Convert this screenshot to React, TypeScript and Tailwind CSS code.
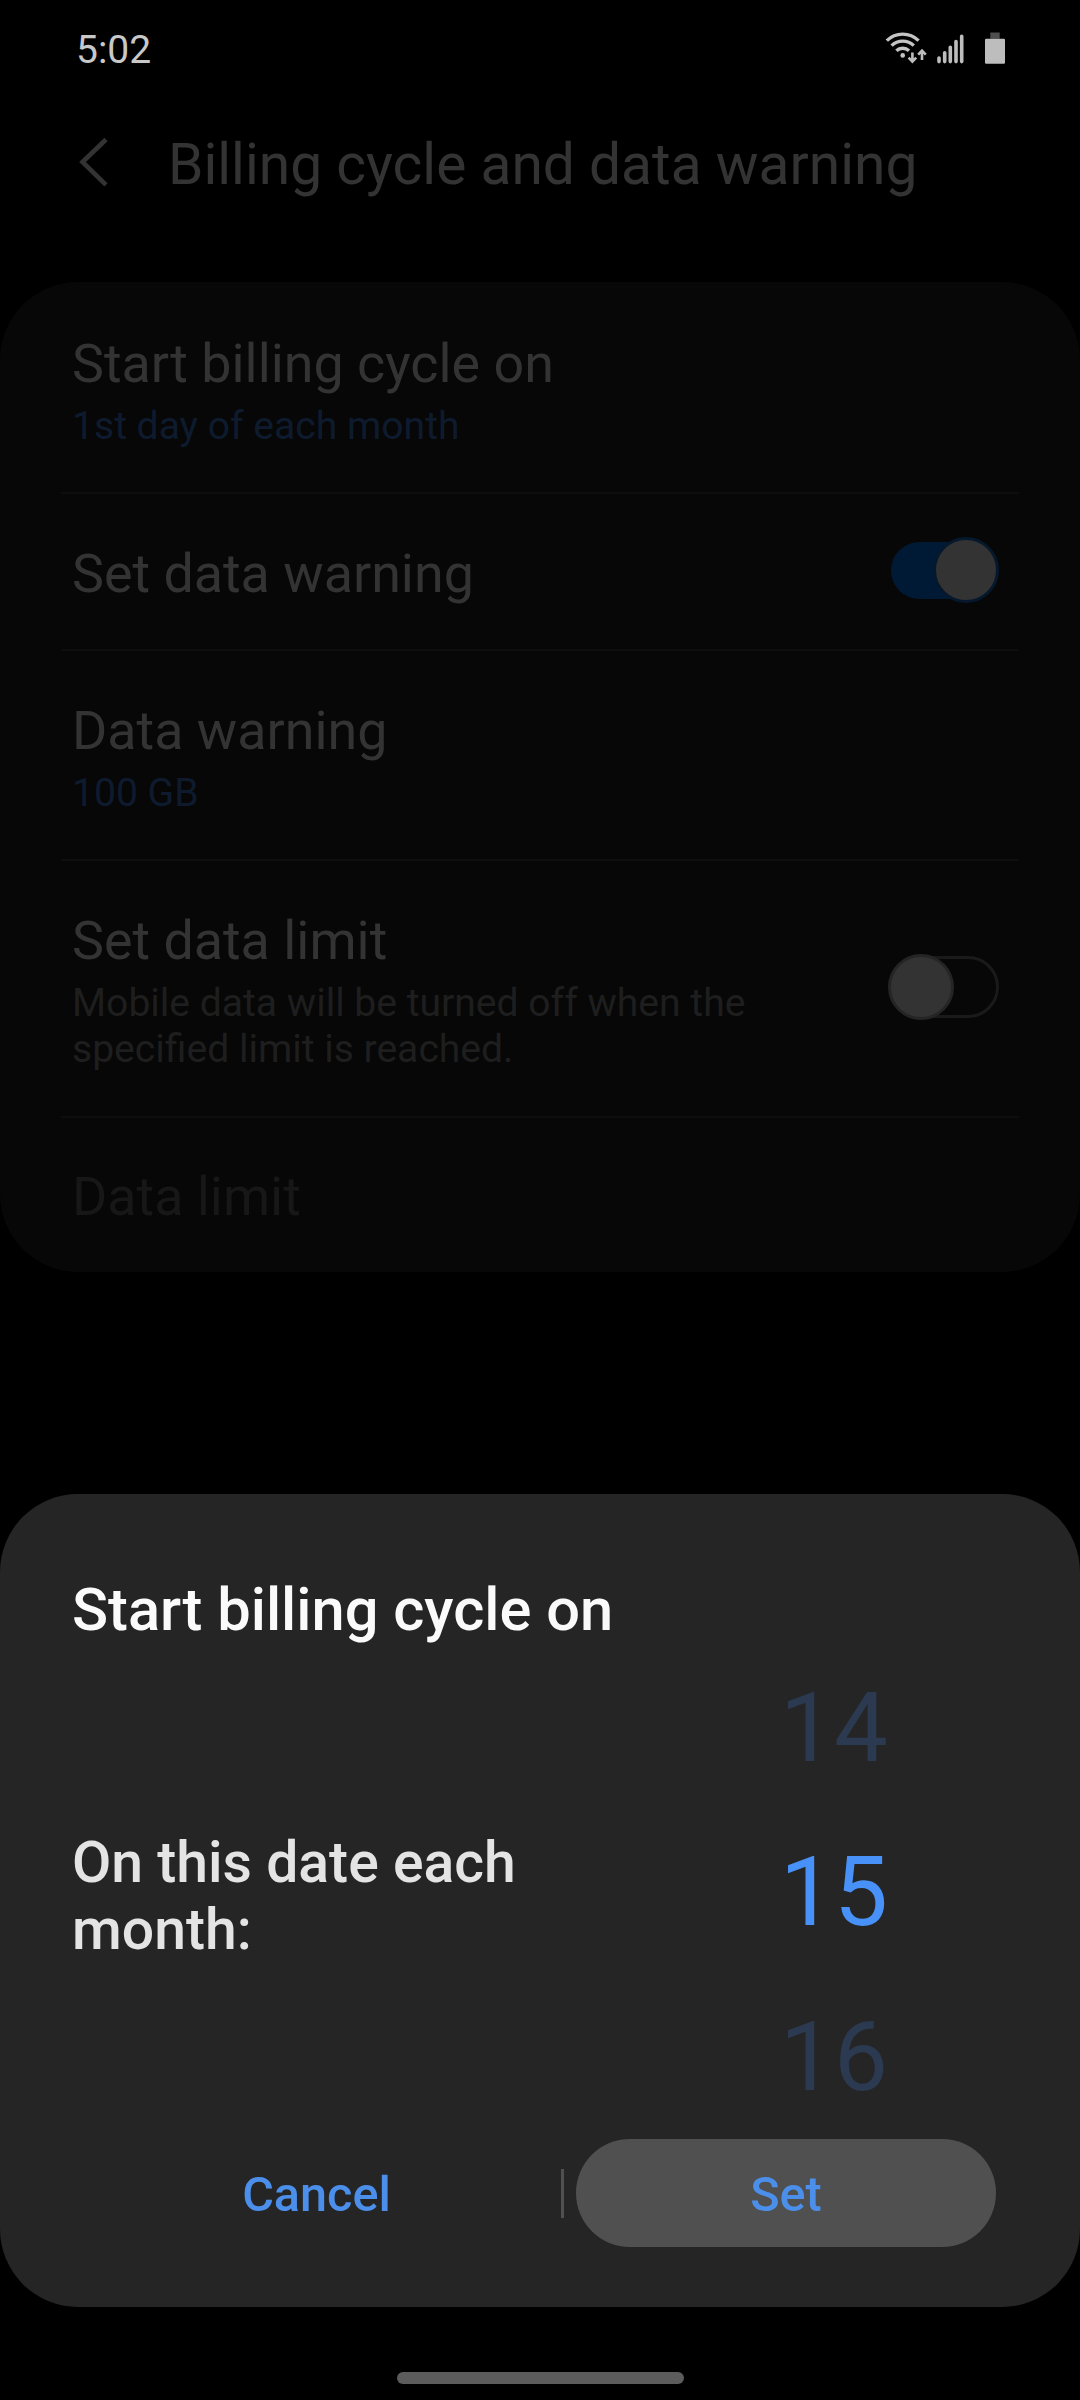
import type { ReactNode } from "react";

function StatusIcons() {
  return (
    <svg className="ml-auto h-[90px] w-[140px]" viewBox="880 0 140 90" fill="none">
      {/* Wi-Fi with transfer arrows */}
      <g stroke="#c4c4c4" strokeWidth="3.4" strokeLinecap="butt">
        <path d="M886.8 40.6A22.7 22.7 0 0 1 918.6 40.6" />
        <path d="M891.6 45.6A16 16 0 0 1 913.8 45.6" />
        <path d="M896.4 50.8A9 9 0 0 1 909 50.8" />
      </g>
      <circle cx="902.7" cy="55.4" r="2.3" fill="#c4c4c4" />
      <g stroke="#bdbdbd" strokeWidth="2.6">
        <path d="M912.4 52.4V61.6M908.6 57.6L912.4 61.6L916.2 57.6" />
        <path d="M922 60V50.6M918.2 54.6L922 50.6L925.8 54.6" />
      </g>
      {/* Signal strength */}
      <g stroke="#bdbdbd" strokeWidth="3.6" strokeLinecap="round">
        <path d="M939 58V61.6M944.7 52.8V61.6M950.3 47.3V61.6M956 41.6V61.6M961.7 36.2V61.6" />
      </g>
      {/* Battery */}
      <path d="M990.3 32.5H999.7V38.7H990.3Z" fill="#4e4e4e" />
      <rect x="985" y="38.7" width="20" height="25" rx="1.2" fill="#bdbdbd" />
    </svg>
  );
}

function SwitchOn() {
  return (
    <div className="flex h-[66px] w-[108px] items-center rounded-full">
      <div className="flex h-[57px] w-[106px] items-center justify-end rounded-full bg-[#001a36]">
        <div className="-mr-[2px] size-[66px] shrink-0 rounded-full border-[3px] border-[#06182c] bg-[#333333]" />
      </div>
    </div>
  );
}

function SwitchOff() {
  return (
    <div className="flex h-[62px] w-[110px] items-center rounded-full border-[3px] border-[#1a1a1a]">
      <div className="-ml-[4px] size-[66px] shrink-0 rounded-full border-[3px] border-[#252525] bg-[#333333]" />
    </div>
  );
}

function Row({ className, title, titleColor = "text-[#333333]", children, control, controlClass }: {
  className: string;
  title: string;
  titleColor?: string;
  children?: ReactNode;
  control?: ReactNode;
  controlClass?: string;
}) {
  return (
    <div className={`flex flex-col ${className}`}>
      <div className="flex flex-1 items-start justify-between pr-[81px] pl-[72px]">
        <div>
          <div className={`text-[53.8px] leading-[64px] ${titleColor}`}>{title}</div>
          {children}
        </div>
        {control && <div className={`shrink-0 ${controlClass}`}>{control}</div>}
      </div>
    </div>
  );
}

function Divider() {
  return <div className="mx-[61px] h-[2px] bg-[#0e0e0e]" />;
}

export default function App() {
  return (
    <div className="flex h-[2400px] w-[1080px] flex-col overflow-hidden bg-black font-[Roboto,sans-serif] whitespace-nowrap">
      <header className="flex h-[90px] items-start pr-[60px] pl-[76px]">
        <span className="pt-[27px] text-[39px] leading-[46px] text-[#c8c8c8]">5:02</span>
        <StatusIcons />
      </header>

      <div className="flex h-[192px] items-start pt-[40px] pl-[72px]">
        <svg className="mt-[2px] mr-[48px] h-[60px] w-[48px]" viewBox="72 132 48 60" fill="none">
          <path d="M106 139.5L82.5 162L106 184.8" stroke="#333333" strokeWidth="4.6" />
        </svg>
        <h1 className="pt-px text-[56.9px] leading-[68px] text-[#333333]">Billing cycle and data warning</h1>
      </div>

      <section className="flex h-[990px] flex-col rounded-[78px] bg-[#070707]">
        <Row className="h-[210px] pt-[50px]" title="Start billing cycle on">
          <div className="mt-[7px] text-[39.1px] leading-[46px] text-[#0e1b2e]">1st day of each month</div>
        </Row>
        <Divider />
        <Row
          className="h-[155px] pt-[48px]"
          title="Set data warning"
          control={<SwitchOn />}
          controlClass="-mt-[5px]"
        />
        <Divider />
        <Row className="h-[208px] pt-[48px]" title="Data warning">
          <div className="mt-[7px] text-[39.1px] leading-[46px] text-[#0e1b2e]">100 GB</div>
        </Row>
        <Divider />
        <Row
          className="h-[255px] pt-[48px]"
          title="Set data limit"
          control={<SwitchOff />}
          controlClass="mt-[47px]"
        >
          <div className="mt-[7px] text-[39.1px] leading-[46px] text-[#1e1e1e]">
            Mobile data will be turned off when the
            <br />
            specified limit is reached.
          </div>
        </Row>
        <Divider />
        <Row className="h-[154px] pt-[47px]" title="Data limit" titleColor="text-[#171717]" />
      </section>

      <section className="mt-[222px] flex h-[813px] flex-col rounded-[78px] bg-[#252525] pt-[80px]">
        <h2 className="pl-[72px] text-[59.6px] leading-[72px] font-medium text-[#fafafa]">Start billing cycle on</h2>
        <div className="flex h-[493px] items-center pl-[72px]">
          <p className="w-[588px] pt-[6px] text-[57.1px] leading-[67px] font-medium text-[#e4e4e4]">
            On this date each
            <br />
            month:
          </p>
          <div className="w-[348px] text-center text-[96px] leading-[164.3px] text-[#2b3a50]">
            <div>14</div>
            <div className="text-[#4791f8]">15</div>
            <div>16</div>
          </div>
        </div>
        <div className="flex h-[108px] items-center pl-[72px] text-[48.6px] leading-[106px] font-medium text-[#4b8fea]">
          <button className="h-full w-[489px] pt-[3px]">Cancel</button>
          <div className="mr-[12px] h-[49px] w-[3px] bg-[#505050]" />
          <button className="h-full w-[420px] rounded-full bg-[#505050] pt-[3px]">Set</button>
        </div>
      </section>

      <div className="mx-auto mt-[65px] h-[12px] w-[287px] rounded-full bg-[#5c5c5c]" />
    </div>
  );
}
